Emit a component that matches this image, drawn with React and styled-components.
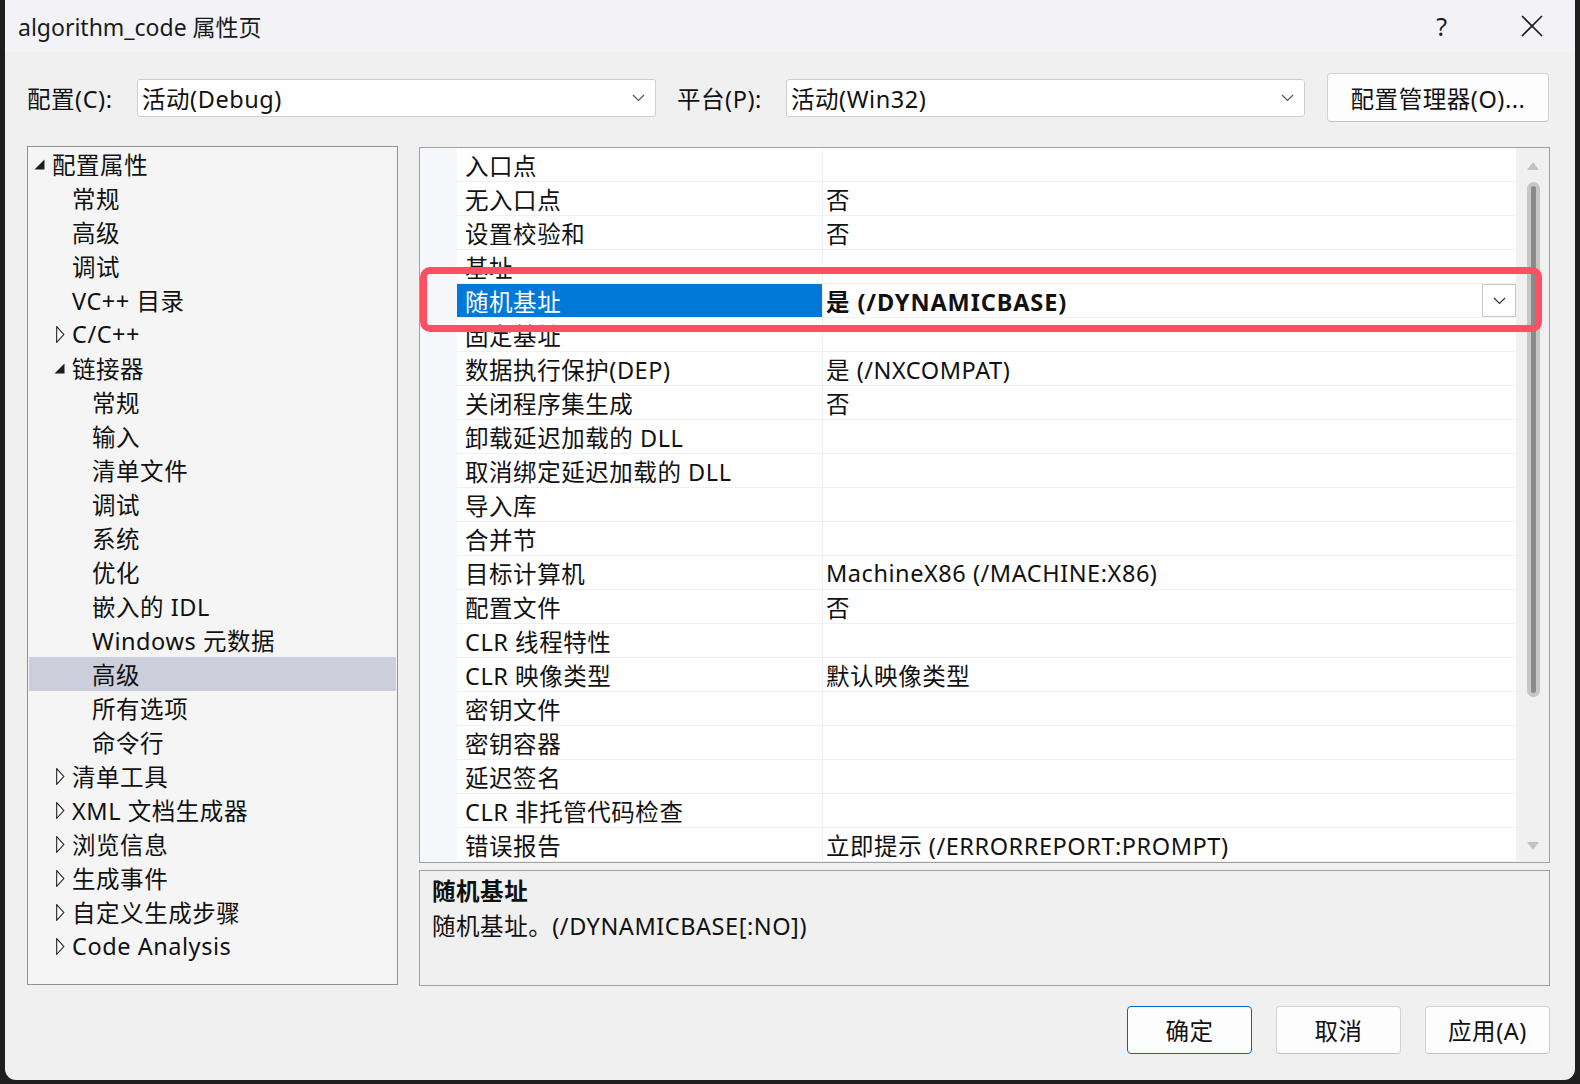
import React from 'react';
import styled, { createGlobalStyle } from 'styled-components';

const GlobalStyle = createGlobalStyle`
  html, body {
    margin: 0;
    padding: 0;
    background: #1e1e1e;
    overflow: hidden;
  }
  body {
    font-family: "Noto Sans", "Noto Sans CJK SC", sans-serif;
    font-size: 23.5px;
    letter-spacing: 0.55px;
    color: #111;
  }
`;

const Window = styled.div`
  margin-left: 5px;
  width: 1570px;
  height: 1080px;
  background: #f0f0f0;
  border-radius: 0 0 11px 11px;
  display: flex;
  flex-direction: column;
  overflow: hidden;
`;

const TitleBar = styled.div`
  height: 52px;
  background: #f3f3f7;
  display: flex;
  align-items: center;
  padding-left: 13px;
`;

const TitleText = styled.div`
  font-size: 23px;
  letter-spacing: 0;
  color: #1a1a1a;
`;

const TitleButtons = styled.div`
  margin-left: auto;
  display: flex;
  height: 100%;
`;

const TitleButton = styled.div`
  width: ${(p) => p.$w}px;
  display: flex;
  align-items: center;
  justify-content: center;
  font-size: 25px;
  color: #1a1a1a;
`;

const Body = styled.div`
  flex: 1;
  display: flex;
  flex-direction: column;
  padding: 0 25px 0 22px;
`;

const ConfigRow = styled.div`
  display: flex;
  align-items: center;
  height: 49px;
  margin-top: 21px;
`;

const Label = styled.div`
  width: ${(p) => p.$w}px;
  margin-left: ${(p) => p.$ml || 0}px;
`;

const Select = styled.div`
  width: 519px;
  height: 38px;
  box-sizing: border-box;
  background: #fff;
  border: 1px solid #cfcfcf;
  border-radius: 3px;
  display: flex;
  align-items: center;
  padding: 0 10px 0 4px;
`;

const SelectText = styled.span`
  flex: 1;
`;

const PushButton = styled.div`
  width: ${(p) => p.$w}px;
  height: ${(p) => p.$h}px;
  margin-left: ${(p) => p.$ml || 0}px;
  box-sizing: border-box;
  background: #fdfdfd;
  border: 1px solid ${(p) => (p.$primary ? '#0067c0' : '#d1d1d1')};
  border-bottom-color: ${(p) => (p.$primary ? '#0067c0' : '#c2c2c2')};
  border-radius: 4px;
  display: flex;
  align-items: center;
  justify-content: center;
  color: #111;
`;

const Main = styled.div`
  display: flex;
  gap: 21px;
  margin-top: 24px;
  height: 840px;
`;

const Tree = styled.div`
  width: 371px;
  height: 839px;
  box-sizing: border-box;
  border: 1px solid #8e9196;
  background: #f5f5f5;
`;

const TreeRow = styled.div`
  height: 34px;
  display: flex;
  align-items: center;
  padding-left: ${(p) => 4 + p.$level * 20}px;
  margin: 0 1px;
  background: ${(p) => (p.$selected ? '#cccedb' : 'transparent')};
`;

const Expander = styled.span`
  width: 19px;
  height: 100%;
  display: flex;
  align-items: center;
  flex-shrink: 0;
`;

const RightCol = styled.div`
  flex: 1;
  display: flex;
  flex-direction: column;
  gap: 7px;
  position: relative;
  padding-top: 1px;
`;

const Grid = styled.div`
  height: 716px;
  box-sizing: border-box;
  border: 1px solid #a0a0a0;
  display: flex;
  background: #fff;
`;

const Gutter = styled.div`
  width: 37px;
  background: #f5f7fb;
`;

const Rows = styled.div`
  width: 1059px;
  overflow: hidden;
`;

const GridRow = styled.div`
  height: 34px;
  flex-shrink: 0;
  box-sizing: border-box;
  display: flex;
  border-bottom: 1px solid #eef0f6;
`;

const NameCell = styled.div`
  width: 365px;
  box-sizing: border-box;
  padding-left: 8px;
  display: flex;
  align-items: center;
  background: ${(p) => (p.$selected ? '#0078d7' : 'transparent')};
  color: ${(p) => (p.$selected ? '#fff' : '#111')};
  white-space: nowrap;
`;

const ValueCell = styled.div`
  flex: 1;
  display: flex;
  align-items: center;
  padding-left: 3px;
  border-left: 1px solid #eef0f6;
  font-weight: ${(p) => (p.$bold ? 700 : 400)};
  letter-spacing: ${(p) => (p.$bold ? '0.9px' : '0.55px')};
  white-space: nowrap;
`;

const ValueText = styled.span`
  flex: 1;
`;

const CellDrop = styled.div`
  width: 34px;
  height: 100%;
  box-sizing: border-box;
  border: 1px solid #c9c9c9;
  background: #fff;
  display: flex;
  align-items: center;
  justify-content: center;
`;

const ScrollBar = styled.div`
  width: 33px;
  background: #f0f0f0;
  display: flex;
  flex-direction: column;
  align-items: center;
`;

const ScrollArrow = styled.div`
  margin-top: ${(p) => p.$mt || 0}px;
  margin-bottom: ${(p) => p.$mb || 0}px;
  height: 8px;
  display: flex;
`;

const Thumb = styled.div`
  margin-top: 12px;
  width: 13px;
  height: 515px;
  box-sizing: border-box;
  border: 4px solid #c6c6c6;
  background: #8a8a8a;
  border-radius: 7px;
  margin-left: 1px;
`;

const Spacer = styled.div`
  flex: 1;
`;

const Description = styled.div`
  flex: 1;
  border: 1px solid #a0a0a0;
  background: #f0f0f0;
  padding: 3px 12px 0;
  line-height: 35px;
`;

const DescTitle = styled.div`
  font-weight: 700;
`;

const Highlight = styled.div`
  position: absolute;
  left: 1px;
  top: 121px;
  width: 1122px;
  height: 65px;
  box-sizing: border-box;
  border: 7px solid #ff4f63;
  border-radius: 10px;
  pointer-events: none;
`;

const Footer = styled.div`
  display: flex;
  justify-content: flex-end;
  gap: 24px;
  margin-top: 20px;
`;

const Chevron = ({ color = '#555' }) => (
  <svg width="13" height="8" viewBox="0 0 13 8">
    <polyline points="1,1 6.5,6.5 12,1" fill="none" stroke={color} strokeWidth="1.2" />
  </svg>
);

const Close = () => (
  <svg width="22" height="22" viewBox="0 0 22 22">
    <line x1="1" y1="1" x2="21" y2="21" stroke="#1a1a1a" strokeWidth="1.6" />
    <line x1="21" y1="1" x2="1" y2="21" stroke="#1a1a1a" strokeWidth="1.6" />
  </svg>
);

const ExpandedIcon = () => (
  <svg width="11" height="11" viewBox="0 0 11 11" style={{ marginLeft: 1 }}>
    <polygon points="10.5,0.5 10.5,10.5 0.5,10.5" fill="#1e1e1e" />
  </svg>
);

const CollapsedIcon = () => (
  <svg width="9" height="17" viewBox="0 0 9 17" style={{ marginLeft: 3 }}>
    <polygon points="0.7,0.7 7.8,8.5 0.7,16.3" fill="#fff" stroke="#1e1e1e" strokeWidth="1.1" />
  </svg>
);

const ArrowUp = () => (
  <svg width="12" height="8" viewBox="0 0 12 8">
    <polygon points="6,0 12,8 0,8" fill="#c2c2c2" />
  </svg>
);

const ArrowDown = () => (
  <svg width="12" height="8" viewBox="0 0 12 8">
    <polygon points="0,0 12,0 6,8" fill="#c2c2c2" />
  </svg>
);

const treeItems = [
  { label: '配置属性', level: 0, state: 'open' },
  { label: '常规', level: 1 },
  { label: '高级', level: 1 },
  { label: '调试', level: 1 },
  { label: 'VC++ 目录', level: 1 },
  { label: 'C/C++', level: 1, state: 'closed' },
  { label: '链接器', level: 1, state: 'open' },
  { label: '常规', level: 2 },
  { label: '输入', level: 2 },
  { label: '清单文件', level: 2 },
  { label: '调试', level: 2 },
  { label: '系统', level: 2 },
  { label: '优化', level: 2 },
  { label: '嵌入的 IDL', level: 2 },
  { label: 'Windows 元数据', level: 2 },
  { label: '高级', level: 2, selected: true },
  { label: '所有选项', level: 2 },
  { label: '命令行', level: 2 },
  { label: '清单工具', level: 1, state: 'closed' },
  { label: 'XML 文档生成器', level: 1, state: 'closed' },
  { label: '浏览信息', level: 1, state: 'closed' },
  { label: '生成事件', level: 1, state: 'closed' },
  { label: '自定义生成步骤', level: 1, state: 'closed' },
  { label: 'Code Analysis', level: 1, state: 'closed' },
];

const properties = [
  ['入口点', ''],
  ['无入口点', '否'],
  ['设置校验和', '否'],
  ['基址', ''],
  ['随机基址', '是 (/DYNAMICBASE)', true],
  ['固定基址', ''],
  ['数据执行保护(DEP)', '是 (/NXCOMPAT)'],
  ['关闭程序集生成', '否'],
  ['卸载延迟加载的 DLL', ''],
  ['取消绑定延迟加载的 DLL', ''],
  ['导入库', ''],
  ['合并节', ''],
  ['目标计算机', 'MachineX86 (/MACHINE:X86)'],
  ['配置文件', '否'],
  ['CLR 线程特性', ''],
  ['CLR 映像类型', '默认映像类型'],
  ['密钥文件', ''],
  ['密钥容器', ''],
  ['延迟签名', ''],
  ['CLR 非托管代码检查', ''],
  ['错误报告', '立即提示 (/ERRORREPORT:PROMPT)'],
];

function App() {
  return (
    <>
      <GlobalStyle />
      <Window>
        <TitleBar>
          <TitleText>algorithm_code 属性页</TitleText>
          <TitleButtons>
            <TitleButton $w={94}>?</TitleButton>
            <TitleButton $w={86}><Close /></TitleButton>
          </TitleButtons>
        </TitleBar>
        <Body>
          <ConfigRow>
            <Label $w={110}>配置(C):</Label>
            <Select>
              <SelectText>活动(Debug)</SelectText>
              <Chevron />
            </Select>
            <Label $w={109} $ml={21}>平台(P):</Label>
            <Select>
              <SelectText>活动(Win32)</SelectText>
              <Chevron />
            </Select>
            <PushButton $w={222} $h={49} $ml={22}>配置管理器(O)...</PushButton>
          </ConfigRow>
          <Main>
            <Tree>
              {treeItems.map((item, i) => (
                <TreeRow key={i} $level={item.level} $selected={item.selected}>
                  <Expander>
                    {item.state === 'open' && <ExpandedIcon />}
                    {item.state === 'closed' && <CollapsedIcon />}
                  </Expander>
                  {item.label}
                </TreeRow>
              ))}
            </Tree>
            <RightCol>
              <Grid>
                <Gutter />
                <Rows>
                  {properties.map(([name, value, selected], i) => (
                    <GridRow key={i}>
                      <NameCell $selected={selected}>{name}</NameCell>
                      <ValueCell $bold={selected}>
                        <ValueText>{value}</ValueText>
                        {selected && (
                          <CellDrop>
                            <Chevron color="#333" />
                          </CellDrop>
                        )}
                      </ValueCell>
                    </GridRow>
                  ))}
                </Rows>
                <ScrollBar>
                  <ScrollArrow $mt={14}><ArrowUp /></ScrollArrow>
                  <Thumb />
                  <Spacer />
                  <ScrollArrow $mb={12}><ArrowDown /></ScrollArrow>
                </ScrollBar>
              </Grid>
              <Description>
                <DescTitle>随机基址</DescTitle>
                <div>随机基址。(/DYNAMICBASE[:NO])</div>
              </Description>
              <Highlight />
            </RightCol>
          </Main>
          <Footer>
            <PushButton $w={125} $h={48} $primary>确定</PushButton>
            <PushButton $w={125} $h={48}>取消</PushButton>
            <PushButton $w={125} $h={48}>应用(A)</PushButton>
          </Footer>
        </Body>
      </Window>
    </>
  );
}

export default App;
